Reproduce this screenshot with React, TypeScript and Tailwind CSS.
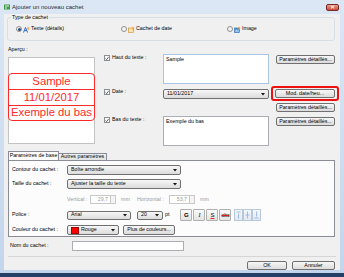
import React from "react";

const btn =
  "border border-[#707070] rounded-[2px] bg-linear-to-b from-[#f7f7f7] to-[#dcdcdc] flex items-center justify-center";
const combo =
  "border border-[#707070] rounded-[2px] bg-linear-to-b from-[#f7f7f7] to-[#dcdcdc] flex items-center pl-[3px] pr-[3px]";
const fmt =
  "w-[12px] h-[12px] border border-[#b0b0b0] rounded-[1px] bg-linear-to-b from-[#fafafa] to-[#e4e4e4] flex items-center justify-center";

function Arrow() {
  return (
    <svg width="4" height="3" viewBox="0 0 4 3">
      <path d="M0 0h4L2 2.6z" fill="#111" />
    </svg>
  );
}

function Combo({ className, children }: { className: string; children: React.ReactNode }) {
  return (
    <div className={`${combo} ${className}`}>
      <div className="flex-1 flex items-center">{children}</div>
      <Arrow />
    </div>
  );
}

function Check({ label }: { label: string }) {
  return (
    <div className="flex items-center gap-[2px]">
      <div className="w-[6px] h-[6px] border border-[#8e8f8f] bg-linear-to-b from-[#f4f4f4] to-[#ffffff] flex items-center justify-center">
        <svg width="5" height="5" viewBox="0 0 5 5">
          <path d="M0.6 2.6L2 4L4.4 0.8" stroke="#1c2e4a" strokeWidth="0.9" fill="none" />
        </svg>
      </div>
      <span>{label}</span>
    </div>
  );
}

function Radio({ checked }: { checked?: boolean }) {
  return (
    <div className="w-[6px] h-[6px] rounded-full border border-[#8e8f8f] bg-[#f4f4f4] flex items-center justify-center">
      {checked && <div className="w-[3px] h-[3px] rounded-full bg-[#2b4a78]" />}
    </div>
  );
}

function Spin({ value }: { value: string }) {
  return (
    <div className="flex items-center h-[9px]">
      <div className="w-[21px] h-full border border-[#c9c9c9] bg-white text-[#9a9a9a] flex items-center justify-end pr-[2px]">
        {value}
      </div>
      <div className="w-[5px] h-full border border-l-0 border-[#c9c9c9] bg-[#f4f4f4]" />
    </div>
  );
}

export default function App() {
  return (
    <div className="w-[344px] h-[277px] bg-linear-to-b from-[#dce7f5] to-[#c3d5ec] border-b-[4px] border-[#233f63] flex flex-col font-['Liberation_Sans',Arial,sans-serif] text-[5.3px] text-black overflow-hidden leading-none">
      {/* Title bar */}
      <div className="h-[14px] flex items-center pl-[4px] shrink-0">
        <svg width="6" height="6" viewBox="0 0 6 6">
          <rect x="0" y="0.5" width="6" height="5" fill="#3f9b4a" />
          <rect x="1" y="1.5" width="4" height="1" fill="#dff3df" />
          <rect x="1" y="3.5" width="2" height="1" fill="#dff3df" />
        </svg>
        <span className="ml-[2px] text-[6px] text-[#1e2a3a]">Ajouter un nouveau cachet</span>
        <div className="ml-auto mr-[5px] w-[13px] h-[7px] rounded-[2px] border border-[#7a2a22] bg-linear-to-b from-[#e8a093] to-[#c8463a] flex items-center justify-center">
          <svg width="5" height="4" viewBox="0 0 5 4">
            <path d="M0.8 0.5L4.2 3.5M4.2 0.5L0.8 3.5" stroke="#fff" strokeWidth="1" />
          </svg>
        </div>
      </div>

      {/* Body */}
      <div className="mx-[4px] h-[256px] bg-[#f0f0f0] flex flex-col shrink-0">
        {/* Type de cachet */}
        <fieldset className="ml-[3px] w-[328px] h-[27px] border border-[#d5dfe5] rounded-[3px] px-0">
          <legend className="ml-[3px] px-[1px] leading-[7px]">Type de cachet</legend>
          <div className="flex items-center h-[6px] mt-[5px] pl-[8px]">
            <div className="w-[105px] flex items-center gap-[1px]">
              <Radio checked />
              <svg width="7" height="7" viewBox="0 0 7 7">
                <path d="M0.5 6.5L2.5 1.5L4.5 6.5M1.3 4.6h2.4" stroke="#2d6bd0" strokeWidth="1" fill="none" />
                <path d="M4.5 0.3L5.2 1.6L6.7 1.8L5.6 2.8L5.9 4.2L4.5 3.5z" fill="#f29a1f" />
              </svg>
              <span>Texte (détails)</span>
            </div>
            <div className="w-[106px] flex items-center gap-[1px]">
              <Radio />
              <svg width="7" height="7" viewBox="0 0 7 7">
                <rect x="0.5" y="2" width="5" height="4.5" fill="#fbe3b0" stroke="#c9892a" strokeWidth="0.6" />
                <path d="M4.5 0.3L5.2 1.6L6.7 1.8L5.6 2.8L5.9 4.2L4.5 3.5z" fill="#f29a1f" />
              </svg>
              <span>Cachet de date</span>
            </div>
            <div className="flex items-center gap-[1px]">
              <Radio />
              <svg width="7" height="7" viewBox="0 0 7 7">
                <rect x="0.5" y="2" width="5" height="4.5" fill="#4a9be0" stroke="#2b6fb4" strokeWidth="0.6" />
                <path d="M1 5.5L2.5 3.8L3.6 5L4.3 4.3L5.2 5.5z" fill="#dff0ff" />
                <path d="M4.5 0.3L5.2 1.6L6.7 1.8L5.6 2.8L5.9 4.2L4.5 3.5z" fill="#f29a1f" />
              </svg>
              <span>Image</span>
            </div>
          </div>
        </fieldset>

        {/* Middle */}
        <div className="flex mt-[5px] ml-[4px]">
          <div className="w-[87px] flex flex-col">
            <div className="h-[11px] pt-[1px]">Aperçu :</div>
            <div className="h-[87px] border border-[#c3c3c3] bg-white pt-[15px]">
              <div className="-mx-[1px] h-[48px] border border-[#ff2a2a] rounded-[4px] flex flex-col text-[#ff2a2a] text-[11.3px] leading-none">
                <div className="h-[16px] flex items-center justify-center border-b border-[#ff2a2a]">Sample</div>
                <div className="h-[16px] flex items-center justify-center border-b border-[#ff2a2a]">11/01/2017</div>
                <div className="flex-1 flex items-center justify-center">Exemple du bas</div>
              </div>
            </div>
          </div>

          <div className="ml-[9px] mt-[8px] flex flex-col">
            {/* Haut */}
            <div className="flex h-[30px]">
              <div className="w-[59px] pt-[1px]">
                <Check label="Haut du texte :" />
              </div>
              <div className="w-[106px] h-[30px] border border-[#a9c6e6] bg-white p-[2px]">Sample</div>
              <div className="ml-[7px] mt-[1px] w-[59px] h-[9px]">
                <div className={`${btn} h-full`}>Paramètres détaillés...</div>
              </div>
            </div>
            {/* Date */}
            <div className="flex h-[26px] mt-[2px]">
              <div className="w-[59px] pt-[3px]">
                <Check label="Date :" />
              </div>
              <Combo className="w-[106px] h-[10px] mt-[3px]">11/01/2017</Combo>
              <div className="ml-[2px] w-[68px] flex flex-col">
                <div className="h-[16px] border-2 border-[#ee1111] rounded-[3px] p-[1px] px-[2px]">
                  <div className={`${btn} h-full`}>Mod. date/heu...</div>
                </div>
                <div className={`${btn} ml-[5px] w-[59px] h-[9px] mt-[2px]`}>Paramètres détaillés...</div>
              </div>
            </div>
            {/* Bas */}
            <div className="flex h-[30px] mt-[4px]">
              <div className="w-[59px] pt-[1px]">
                <Check label="Bas du texte :" />
              </div>
              <div className="w-[106px] h-[30px] border border-[#abadb3] bg-white p-[2px]">Exemple du bas</div>
              <div className="ml-[7px] mt-[1px] w-[59px] h-[9px]">
                <div className={`${btn} h-full`}>Paramètres détaillés...</div>
              </div>
            </div>
          </div>
        </div>

        {/* Tabs */}
        <div className="ml-[4px] mt-[5px] flex items-end h-[9px]">
          <div className="w-[51px] h-[9px] border border-b-0 border-[#898c95] bg-[#fcfcfc] flex items-center justify-center">
            Paramètres de base
          </div>
          <div className="w-[48px] h-[7px] border border-l-0 border-b-0 border-[#898c95] bg-linear-to-b from-[#f3f3f3] to-[#e3e3e3] flex items-center justify-center">
            Autres paramètres
          </div>
        </div>
        <div className="ml-[4px] w-[327px] h-[77px] border border-[#898c95] bg-[#fcfcfc] pl-[3px] flex flex-col">
          <div className="flex items-center h-[10px] mt-[4px]">
            <div className="w-[55px]">Contour du cachet :</div>
            <Combo className="w-[114px] h-[10px]">Boîte arrondie</Combo>
          </div>
          <div className="flex items-center h-[10px] mt-[4px]">
            <div className="w-[55px]">Taille du cachet :</div>
            <Combo className="w-[114px] h-[10px]">Ajuster la taille du texte</Combo>
          </div>
          <div className="flex items-center h-[9px] mt-[6px] text-[#9a9a9a]">
            <div className="w-[55px]" />
            <div className="w-[23px]">Vertical :</div>
            <Spin value="29,7" />
            <div className="ml-[5px] w-[16px]">mm</div>
            <div className="w-[32px]">Horizontal :</div>
            <Spin value="53,7" />
            <div className="ml-[5px]">mm</div>
          </div>
          <div className="flex items-center h-[12px] mt-[5px]">
            <div className="w-[55px]">Police :</div>
            <Combo className="w-[64px] h-[9px]">Arial</Combo>
            <Combo className="ml-[6px] w-[26px] h-[9px]">20</Combo>
            <div className="ml-[2px]">pt</div>
            <div className="ml-[11px] flex gap-[1px]">
              <div className={`${fmt} font-bold text-[6px]`}>G</div>
              <div className={`${fmt} italic font-['Liberation_Serif',serif] text-[6px]`}>I</div>
              <div className={`${fmt} text-[6px] underline decoration-[#e02020]`}>S</div>
              <div className={`${fmt} text-[5px] line-through decoration-[#e02020]`}>abc</div>
            </div>
            <div className="ml-[3px] flex">
              {[0, 1, 2].map((i) => (
                <div key={i} className="w-[9px] h-[12px] border border-[#b7c8db] bg-linear-to-b from-[#f4f7fb] to-[#e2e9f1] flex items-center justify-center">
                  <svg width="5" height="8" viewBox="0 0 5 8">
                    <path
                      d={i === 0 ? "M0.5 1h4M2.5 2.5v5" : i === 1 ? "M0.5 4h4M2.5 0.5v7" : "M0.5 7h4M2.5 0.5v5"}
                      stroke="#8fb1d6"
                      strokeWidth="0.8"
                    />
                  </svg>
                </div>
              ))}
            </div>
          </div>
          <div className="flex items-center h-[10px] mt-[4px]">
            <div className="w-[55px]">Couleur du cachet :</div>
            <Combo className="w-[52px] h-[10px] pl-[1px]">
              <div className="w-[8px] h-[7px] bg-[#ff0000] border border-[#a00000]" />
              <span className="ml-[2px]">Rouge</span>
            </Combo>
            <div className={`${btn} ml-[4px] w-[52px] h-[10px]`}>Plus de couleurs...</div>
          </div>
        </div>

        {/* Nom */}
        <div className="flex items-center h-[10px] mt-[4px] ml-[6px]">
          <div className="w-[62px]">Nom du cachet :</div>
          <div className="w-[112px] h-[10px] border border-[#abadb3] bg-white" />
        </div>
        <div className="mx-[4px] mt-[5px] h-px bg-[#d5d5d5]" />
        <div className="flex justify-end gap-[5px] mr-[5px] mt-[4px]">
          <div className={`${btn} w-[40px] h-[9px]`}>OK</div>
          <div className={`${btn} w-[43px] h-[9px]`}>Annuler</div>
        </div>
      </div>
    </div>
  );
}
